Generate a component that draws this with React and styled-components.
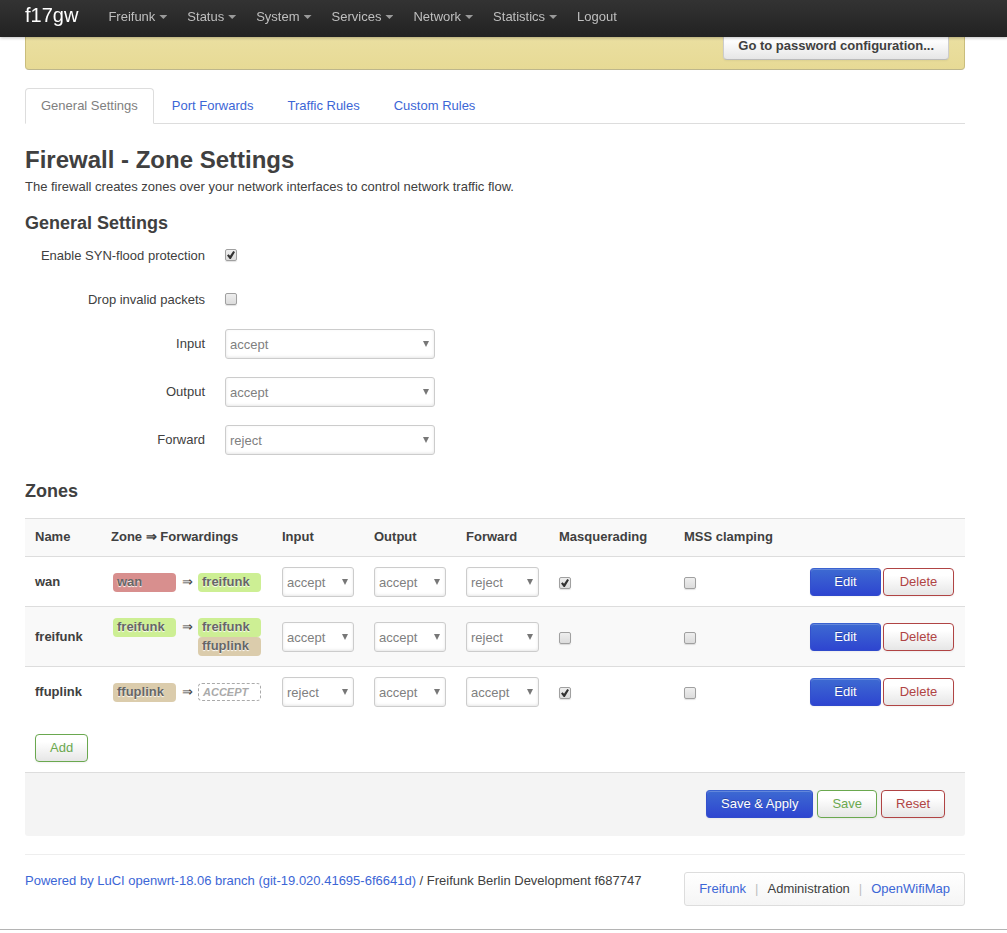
import React from "react";
import styled, { createGlobalStyle, css } from "styled-components";

const GlobalStyle = createGlobalStyle`
  *, *::before, *::after { box-sizing: border-box; }
  body {
    margin: 0;
    background: #fff;
    color: #404040;
    font: 13px/18px "Liberation Sans", Arial, sans-serif;
  }
  button, select, input { font: inherit; margin: 0; }
  h2, h3, p, ul { margin: 0; padding: 0; }
`;

const link = css`
  color: #3c66d6;
  text-decoration: none;
  &:hover { text-decoration: underline; }
`;

const Page = styled.div`
  border-bottom: 1px solid #b4b4b4;
`;

const TopBar = styled.header`
  position: fixed;
  top: 0;
  left: 0;
  right: 0;
  z-index: 10;
  display: flex;
  height: 37px;
  padding: 0 25px;
  background: linear-gradient(#333, #222);
  box-shadow: 0 1px 3px rgba(0, 0, 0, 0.25);
`;

const Brand = styled.a`
  padding: 5px 20px 0 0;
  color: #fff;
  font-size: 20px;
  line-height: 20px;
  text-decoration: none;
`;

const Menu = styled.nav`
  display: flex;
`;

const MenuLink = styled.a`
  display: flex;
  padding: 8px 10px;
  color: #bfbfbf;
  text-decoration: none;
  white-space: nowrap;
`;

const Caret = styled.span`
  width: 8px;
  height: 4px;
  margin: 7px 0 0 4px;
  background: #9a9a9a;
  clip-path: polygon(0 0, 100% 0, 50% 100%);
`;

const Container = styled.main`
  max-width: 982px;
  padding: 0 17px 0 0;
  margin: 0 25px;
`;

const Warning = styled.div`
  display: flex;
  justify-content: flex-end;
  padding: 32px 15px 9px;
  border: 1px solid #c9bd7c;
  border-top: 0;
  border-bottom-color: #bdb68c;
  border-radius: 0 0 4px 4px;
  background: linear-gradient(#eee5ae, #e7da95);
`;

const buttonTone = {
  plain: css`
    color: #404040;
    border-color: #ccc #ccc #bbb;
    font-weight: bold;
  `,
  primary: css`
    color: #fff;
    border-color: #3a62d0 #3450cd #2f49cb;
    background: linear-gradient(#3d6ad2, #2e45d0);
    text-shadow: 0 -1px 0 rgba(0, 0, 0, 0.25);
  `,
  positive: css`
    color: #6aa84f;
    border-color: #6aa84f;
  `,
  negative: css`
    color: #b04444;
    border-color: #b04444;
  `,
};

const Button = styled.button`
  height: 28px;
  padding: 4px 14px;
  border: 1px solid;
  border-radius: 4px;
  background: linear-gradient(#fff, #fff 25%, #e6e6e6);
  box-shadow: inset 0 1px 0 rgba(255, 255, 255, 0.2), 0 1px 2px rgba(0, 0, 0, 0.05);
  line-height: 18px;
  white-space: nowrap;
  cursor: pointer;
  ${(p) => buttonTone[p.$tone]}
`;

const Tabs = styled.nav`
  display: flex;
  gap: 2px;
  margin: 18px 0;
  border-bottom: 1px solid #ddd;
`;

const Tab = styled.a`
  margin-bottom: -1px;
  padding: 0 15px;
  border: 1px solid transparent;
  border-radius: 4px 4px 0 0;
  line-height: 34px;
  ${link}
  ${(p) =>
    p.$active &&
    css`
      color: #808080;
      background: #fff;
      border-color: #ddd #ddd #fff;
    `}
`;

const Title = styled.h2`
  font-size: 24px;
  line-height: 36px;
`;

const SectionTitle = styled.h3`
  font-size: 18px;
  line-height: 36px;
`;

const Intro = styled.p`
  margin-bottom: 9px;
`;

const Form = styled.form`
  display: flex;
  flex-direction: column;
  gap: 18px;
  margin-bottom: 18px;
`;

const Field = styled.div`
  display: grid;
  grid-template-columns: 180px 210px;
  column-gap: 20px;
  min-height: 26px;
`;

const FieldLabel = styled.label`
  padding-top: 6px;
  text-align: right;
`;

const FieldCheck = styled.div`
  display: flex;
  padding-top: 8px;
`;

const Check = styled.input.attrs({ type: "checkbox" })`
  appearance: none;
  display: block;
  width: 12px;
  height: 12px;
  border: 1px solid #a0a0a0;
  border-radius: 2px;
  background: linear-gradient(#eee, #dcdcdc);
  box-shadow: 0 1px 1px rgba(0, 0, 0, 0.12);
  &:checked::before {
    content: "";
    display: block;
    width: 8px;
    height: 8px;
    margin: 1px;
    background: #333;
    clip-path: polygon(0 55%, 20% 40%, 38% 58%, 78% 0, 100% 14%, 48% 100%, 34% 100%);
  }
`;

const SelectFrame = styled.div`
  position: relative;
  width: 100%;
  &::after {
    content: "";
    position: absolute;
    top: 12px;
    right: 6px;
    width: 6px;
    height: 6px;
    background: #777;
    clip-path: polygon(0 0, 100% 0, 50% 100%);
    pointer-events: none;
  }
`;

const SelectBox = styled.select`
  appearance: none;
  display: block;
  width: 100%;
  height: 30px;
  padding: 1px 16px 0 4px;
  border: 1px solid #ccc;
  border-radius: 3px;
  background: #fff;
  box-shadow: inset 0 -1px 3px rgba(0, 0, 0, 0.1);
  color: #808080;
`;

const Table = styled.table`
  width: 100%;
  margin: 9px 0 18px;
  border-spacing: 0;
  table-layout: fixed;
`;

const Col = styled.col`
  width: ${(p) => p.$width};
`;

const Row = styled.tr`
  background: ${(p) => (p.$shaded ? "#f9f9f9" : "#fff")};
`;

const HeadCell = styled.th`
  height: 38px;
  padding: 0 10px 2px;
  border-top: 1px solid #ddd;
  text-align: left;
  white-space: nowrap;
`;

const Cell = styled.td`
  height: 50px;
  padding: 10px 10px 9px;
  border-top: 1px solid #ddd;
  font-weight: ${(p) => (p.$strong ? "bold" : "normal")};
`;

const CheckCell = styled(Cell)`
  padding-top: 12px;
`;

const ActionCell = styled(Cell)`
  padding-right: 11px;
`;

const Forwarding = styled.div`
  display: flex;
  padding: 1px 0 1px 2px;
`;

const Arrow = styled.span`
  width: 22px;
  text-align: center;
`;

const Badge = styled.div`
  width: 63px;
  height: 19px;
  padding: 0 4px;
  border-radius: 4px;
  background: ${(p) => p.$color};
  color: #666;
  font-weight: bold;
  line-height: 18px;
  text-shadow: 0 1px 1px #fff;
`;

const EmptyBadge = styled.div`
  width: 63px;
  height: 18px;
  padding: 0 4px;
  border: 1px dashed #aaa;
  border-radius: 4px;
  color: #aaa;
  font-size: 11px;
  font-style: italic;
  font-weight: bold;
  line-height: 16px;
`;

const RowActions = styled.div`
  display: grid;
  grid-template-columns: 71px 71px;
  justify-content: end;
  gap: 2px;
`;

const AddBar = styled.div`
  padding: 0 10px 10px;
`;

const PageActions = styled.div`
  display: flex;
  justify-content: flex-end;
  gap: 4px;
  padding: 17px 20px 18px;
  border-top: 1px solid #ddd;
  border-radius: 0 0 3px 3px;
  background: #f4f4f4;
`;

const Footer = styled.footer`
  display: flex;
  justify-content: space-between;
  margin-top: 18px;
  padding: 17px 0 23px;
  border-top: 1px solid #eee;
`;

const FooterLink = styled.a`
  ${link}
`;

const Modes = styled.ul`
  display: flex;
  padding: 7px 14px;
  border: 1px solid #ddd;
  border-radius: 3px;
  background: linear-gradient(#fff, #f5f5f5);
  list-style: none;
`;

const Mode = styled.li`
  & + &::before {
    content: "|";
    margin: 0 9px;
    color: #bfbfbf;
  }
`;

const menu = ["Freifunk", "Status", "System", "Services", "Network", "Statistics"];
const tabs = ["General Settings", "Port Forwards", "Traffic Rules", "Custom Rules"];
const policies = ["accept", "reject", "drop"];
const colors = { wan: "#d88f8e", freifunk: "#cdef94", ffuplink: "#dbccac" };
const columns = ["76px", "171px", "92px", "92px", "93px", "125px", "125px", "auto"];
const headings = ["Name", "Zone ⇒ Forwardings", "Input", "Output", "Forward", "Masquerading", "MSS clamping"];
const zones = [
  { name: "wan", to: ["freifunk"], rules: ["accept", "accept", "reject"], masq: true },
  { name: "freifunk", to: ["freifunk", "ffuplink"], rules: ["accept", "accept", "reject"], masq: false },
  { name: "ffuplink", to: [], rules: ["reject", "accept", "accept"], masq: true },
];

function Select(props) {
  return (
    <SelectFrame>
      <SelectBox {...props}>
        {policies.map((p) => (
          <option key={p}>{p}</option>
        ))}
      </SelectBox>
    </SelectFrame>
  );
}

function CheckField({ id, label, checked }) {
  return (
    <Field>
      <FieldLabel htmlFor={id}>{label}</FieldLabel>
      <FieldCheck>
        <Check id={id} defaultChecked={checked} />
      </FieldCheck>
    </Field>
  );
}

function SelectField({ id, label, value }) {
  return (
    <Field>
      <FieldLabel htmlFor={id}>{label}</FieldLabel>
      <Select id={id} defaultValue={value} />
    </Field>
  );
}

function ZoneRow({ zone, shaded }) {
  return (
    <Row $shaded={shaded}>
      <Cell $strong>{zone.name}</Cell>
      <Cell>
        <Forwarding>
          <Badge $color={colors[zone.name]}>{zone.name}</Badge>
          <Arrow>⇒</Arrow>
          <div>
            {zone.to.map((t) => (
              <Badge key={t} $color={colors[t]}>{t}</Badge>
            ))}
            {zone.to.length === 0 && <EmptyBadge>ACCEPT</EmptyBadge>}
          </div>
        </Forwarding>
      </Cell>
      {zone.rules.map((rule, i) => (
        <Cell key={headings[i + 2]}>
          <Select aria-label={`${zone.name} ${headings[i + 2]}`} defaultValue={rule} />
        </Cell>
      ))}
      <CheckCell>
        <Check aria-label={`${zone.name} Masquerading`} defaultChecked={zone.masq} />
      </CheckCell>
      <CheckCell>
        <Check aria-label={`${zone.name} MSS clamping`} />
      </CheckCell>
      <ActionCell>
        <RowActions>
          <Button type="button" $tone="primary">Edit</Button>
          <Button type="button" $tone="negative">Delete</Button>
        </RowActions>
      </ActionCell>
    </Row>
  );
}

export default function App() {
  return (
    <Page>
      <GlobalStyle />
      <TopBar>
        <Brand href="#">f17gw</Brand>
        <Menu>
          {menu.map((m) => (
            <MenuLink key={m} href="#">
              {m}
              <Caret />
            </MenuLink>
          ))}
          <MenuLink href="#">Logout</MenuLink>
        </Menu>
      </TopBar>
      <Container>
        <Warning>
          <Button type="button" $tone="plain">Go to password configuration...</Button>
        </Warning>
        <Tabs>
          {tabs.map((t, i) => (
            <Tab key={t} href="#" $active={i === 0}>{t}</Tab>
          ))}
        </Tabs>
        <Title>Firewall - Zone Settings</Title>
        <Intro>The firewall creates zones over your network interfaces to control network traffic flow.</Intro>
        <SectionTitle>General Settings</SectionTitle>
        <Form>
          <CheckField id="syn" label="Enable SYN-flood protection" checked />
          <CheckField id="invalid" label="Drop invalid packets" />
          <SelectField id="input" label="Input" value="accept" />
          <SelectField id="output" label="Output" value="accept" />
          <SelectField id="forward" label="Forward" value="reject" />
        </Form>
        <SectionTitle>Zones</SectionTitle>
        <Table>
          <colgroup>
            {columns.map((w, i) => (
              <Col key={i} $width={w} />
            ))}
          </colgroup>
          <thead>
            <Row $shaded>
              {headings.map((h) => (
                <HeadCell key={h} scope="col">{h}</HeadCell>
              ))}
              <HeadCell as="td" />
            </Row>
          </thead>
          <tbody>
            {zones.map((z, i) => (
              <ZoneRow key={z.name} zone={z} shaded={i % 2 === 1} />
            ))}
          </tbody>
        </Table>
        <AddBar>
          <Button type="button" $tone="positive">Add</Button>
        </AddBar>
        <PageActions>
          <Button type="button" $tone="primary">Save &amp; Apply</Button>
          <Button type="button" $tone="positive">Save</Button>
          <Button type="button" $tone="negative">Reset</Button>
        </PageActions>
        <Footer>
          <p>
            <FooterLink href="#">Powered by LuCI openwrt-18.06 branch (git-19.020.41695-6f6641d)</FooterLink>
            {" / Freifunk Berlin Development f687747"}
          </p>
          <Modes>
            <Mode><FooterLink href="#">Freifunk</FooterLink></Mode>
            <Mode>Administration</Mode>
            <Mode><FooterLink href="#">OpenWifiMap</FooterLink></Mode>
          </Modes>
        </Footer>
      </Container>
    </Page>
  );
}
